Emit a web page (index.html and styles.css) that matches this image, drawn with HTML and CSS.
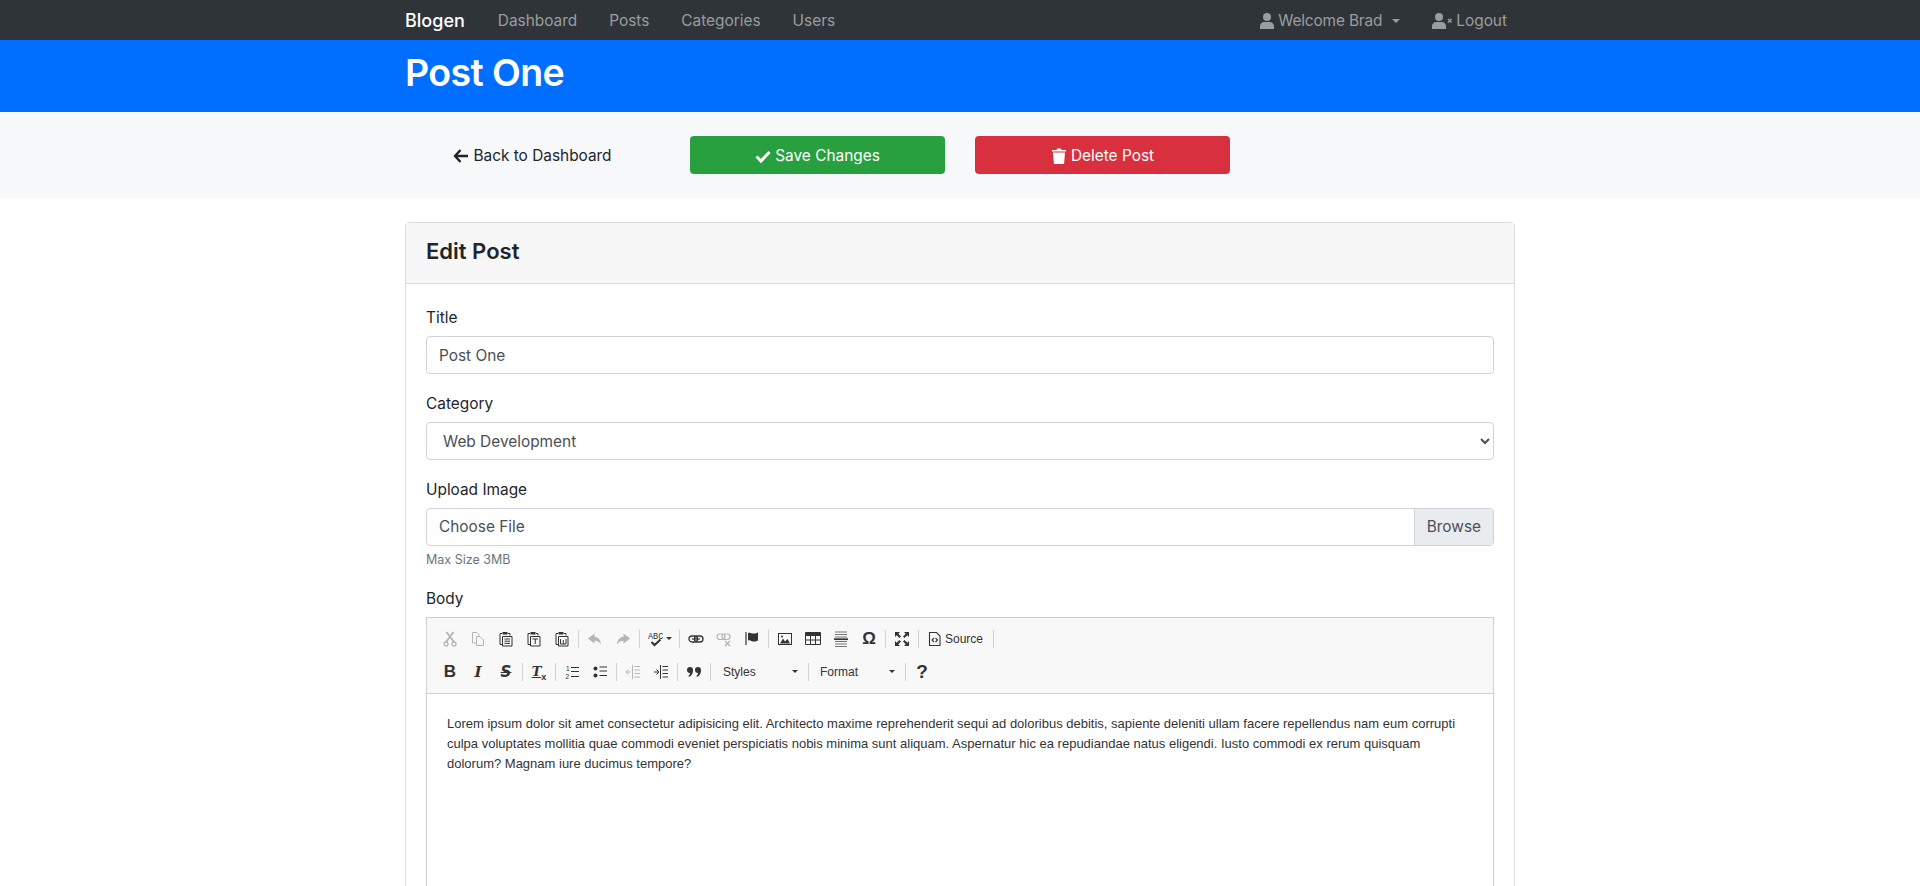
FILE: index.html
```html
<!DOCTYPE html>
<html>
<head>
	<title>Blogen - Edit Post</title>
	<link rel="stylesheet" href="styles.css">
</head>
<body>
	<nav class="navbar">
		<div class="container nav-row">
			<a class="brand">Blogen</a>
			<a class="nav-link">Dashboard</a>
			<a class="nav-link">Posts</a>
			<a class="nav-link">Categories</a>
			<a class="nav-link">Users</a>
			<a class="nav-link push">
				<svg class="ico-user" viewBox="0 0 14 16"><circle cx="7" cy="4" r="4"/><path d="M0 16v-2.500C0 10.500 2 9 4 9h6c2 0 4 1.500 4 4.500V16z"/></svg>
				Welcome Brad<span class="caret"></span>
			</a>
			<a class="nav-link logout">
				<svg class="ico-logout" viewBox="0 0 21 16"><circle cx="7" cy="4" r="4"/><path d="M0 16v-2.500C0 10.500 2 9 4 9h6c2 0 4 1.500 4 4.500V16z"/><path d="M16 6l3.500 3.500M19.500 6L16 9.500" class="x"/></svg>
				Logout
			</a>
		</div>
	</nav>

	<header class="page-head">
		<div class="container">
			<h1>Post One</h1>
		</div>
	</header>

	<section class="actions">
		<div class="container action-row">
			<a class="btn btn-light">
				<svg class="ico" viewBox="0 0 16 16"><path d="M7.500 2L2 8l5.500 6M2.500 8H15" fill="none" stroke="currentColor" stroke-width="2.400"/></svg>
				Back to Dashboard
			</a>
			<a class="btn btn-success">
				<svg class="ico" viewBox="0 0 16 16"><path d="M1.500 8.500l4.500 4.500 8.500-9" fill="none" stroke="currentColor" stroke-width="3"/></svg>
				Save Changes
			</a>
			<a class="btn btn-danger">
				<svg class="ico" viewBox="0 0 14 16"><path d="M0 2h4.500l.7-1.500h3.600L9.500 2H14v1.500H0zM1 4.500h12l-.8 10.200c0 .8-.6 1.300-1.300 1.300H3.100c-.7 0-1.300-.5-1.300-1.300z"/></svg>
				Delete Post
			</a>
		</div>
	</section>

	<main class="container content">
		<div class="card">
			<div class="card-header"><h4>Edit Post</h4></div>
			<div class="card-body">
				<div class="form-group">
					<label>Title</label>
					<input class="form-control" type="text" value="Post One">
				</div>
				<div class="form-group">
					<label>Category</label>
					<select class="form-control">
						<option>Web Development</option>
					</select>
				</div>
				<div class="form-group">
					<label>Upload Image</label>
					<div class="file-field">
						<span class="file-name">Choose File</span>
						<span class="file-btn">Browse</span>
					</div>
					<small class="hint">Max Size 3MB</small>
				</div>
				<div class="form-group">
					<label>Body</label>
					<div class="editor">
						<div class="toolbar">
							<div class="tool-row">
								<svg class="t off" viewBox="0 0 16 16"><path d="M4.500 1l7.500 10M11.500 1L4 11" fill="none" stroke="currentColor" stroke-width="1.800"/><circle cx="4" cy="13" r="2" fill="none" stroke="currentColor" stroke-width="1.300"/><circle cx="12" cy="13" r="2" fill="none" stroke="currentColor" stroke-width="1.300"/></svg>
								<svg class="t off" viewBox="0 0 16 16"><path d="M7 12H2.500V1.500H7L9 3.500V5M6.500 5.500H10l3.500 3.500v5.500h-7z" fill="none" stroke="currentColor"/></svg>
								<svg class="t" viewBox="0 0 16 16"><path d="M4 2.500H2v11h2M10 2.500h2v2" fill="none" stroke="currentColor"/><path d="M4.500 1h5v2.500h-5z"/><path d="M4.500 5.500h9.500v9.500H4.500z" fill="none" stroke="currentColor"/><path d="M6.500 8h5.500M6.500 10.200h5.500M6.500 12.400h5.500" stroke="currentColor"/></svg>
								<svg class="t" viewBox="0 0 16 16"><path d="M4 2.500H2v11h2M10 2.500h2v2" fill="none" stroke="currentColor"/><path d="M4.500 1h5v2.500h-5z"/><path d="M4.500 5.500h9.500v9.500H4.500z" fill="none" stroke="currentColor"/><path d="M6.500 8h5.500M9.250 8v5" stroke="currentColor"/></svg>
								<svg class="t" viewBox="0 0 16 16"><path d="M4 2.500H2v11h2M10 2.500h2v2" fill="none" stroke="currentColor"/><path d="M4.500 1h5v2.500h-5z"/><path d="M4.500 5.500h9.500v9.500H4.500z" fill="none" stroke="currentColor"/><path d="M6.500 8v5h5.500V8M9.250 9v4" fill="none" stroke="currentColor"/></svg>
								<i class="sep"></i>
								<svg class="t off" viewBox="0 0 16 16"><path d="M7.500 2.500L1 7.500l6.500 5V9.800c2.800 0 4.800 1 6.500 3.700-.3-4.500-2.700-7.200-6.500-7.700z"/></svg>
								<svg class="t off" viewBox="0 0 16 16"><path d="M8.500 2.500l6.500 5-6.500 5V9.800c-2.800 0-4.800 1-6.500 3.700.3-4.500 2.700-7.200 6.500-7.700z"/></svg>
								<i class="sep"></i>
								<span class="spell">
									<svg class="t-wide" viewBox="0 0 15 16"><text x="0" y="7.500" class="abc">ABC</text><path d="M3.500 11l3 3 6-5.500" fill="none" stroke="currentColor" stroke-width="2"/></svg>
									<span class="mini-caret"></span>
								</span>
								<i class="sep"></i>
								<svg class="t" viewBox="0 0 16 16"><rect x="1" y="5" width="8.500" height="6" rx="3" fill="none" stroke="currentColor" stroke-width="1.300"/><rect x="6.500" y="5" width="8.500" height="6" rx="3" fill="none" stroke="currentColor" stroke-width="1.300"/><path d="M4 8h8" stroke="currentColor" stroke-width="1.200"/></svg>
								<svg class="t off" viewBox="0 0 16 16"><rect x="1" y="3" width="8" height="5.500" rx="2.700" fill="none" stroke="currentColor" stroke-width="1.200"/><rect x="6" y="3" width="8" height="5.500" rx="2.700" fill="none" stroke="currentColor" stroke-width="1.200"/><path d="M9 10l5 5M14 10l-5 5" stroke="currentColor" stroke-width="1.300"/></svg>
								<svg class="t" viewBox="0 0 16 16"><path d="M2 1v13" stroke="currentColor" stroke-width="1.200"/><path d="M4 2c3-1 3 .5 5 .5s3 0 5-1v8c-2 1-3 1-5 1s-2-2-5-1z"/></svg>
								<i class="sep"></i>
								<svg class="t" viewBox="0 0 16 16"><rect x="1.500" y="2.500" width="13" height="11" fill="none" stroke="currentColor"/><path d="M3 12.500l3-5 2 3 2.500-2.500 2.500 4.500z"/><circle cx="5" cy="5.500" r="1"/></svg>
								<svg class="t" viewBox="0 0 16 16"><path d="M.5 1.500h15v12H.5z" fill="none" stroke="currentColor"/><path d="M.5 1.500h15v3.500H.5z"/><path d="M.5 9h15M5.500 5v8.500M10.500 5v8.500" stroke="currentColor"/></svg>
								<svg class="t" viewBox="0 0 16 16"><path d="M2 1h12M2 3.500h12M2 6h12M2 10.500h12M2 13h12M2 15.500h12" stroke="#777"/><path d="M1 8.200h14" stroke="currentColor" stroke-width="1.700"/></svg>
								<span class="omega">Ω</span>
								<i class="sep"></i>
								<svg class="t" viewBox="0 0 16 16"><path d="M1 1h5L4.300 2.700 7 5.400 5.400 7 2.700 4.300 1 6zM15 1v5l-1.700-1.700L10.600 7 9 5.400l2.700-2.700L10 1zM1 15v-5l1.700 1.700L5.400 9 7 10.600l-2.700 2.700L6 15zM15 15h-5l1.700-1.700L9 10.600 10.600 9l2.700 2.700L15 10z"/></svg>
								<i class="sep"></i>
								<svg class="t" viewBox="0 0 16 16"><path d="M2.500 1.500h7L13 5v9.500H2.500z" fill="none" stroke="currentColor" stroke-width="1.100"/><path d="M7 7L5 9l2 2M8.500 7l2 2-2 2" fill="none" stroke="currentColor" stroke-width="1.100"/></svg>
								<span class="t-label">Source</span>
								<i class="sep"></i>
							</div>
							<div class="tool-row">
								<span class="g bold">B</span>
								<span class="g italic">I</span>
								<span class="g strike">S</span>
								<i class="sep"></i>
								<span class="g clear"><u>T</u><sub>x</sub></span>
								<i class="sep"></i>
								<svg class="t" viewBox="0 0 16 16"><path d="M7 3.500h8M7 7.500h8M7 12.500h8" stroke="currentColor" stroke-width="1.200"/><text x="2" y="6.500" class="num">1</text><text x="1.500" y="14.500" class="num">2</text></svg>
								<svg class="t" viewBox="0 0 16 16"><circle cx="3.500" cy="4.500" r="2"/><circle cx="3.500" cy="11.500" r="2"/><path d="M7.500 3h7.500M7.500 7h7.500M7.500 11.500h7.500" stroke="currentColor" stroke-width="1.200"/></svg>
								<i class="sep"></i>
								<svg class="t off" viewBox="0 0 16 16"><path d="M7.500 1v14M9.500 2.500H15M9.500 6H15M9.500 9.500H15M9.500 13H15M1 8h4.500M3.500 5.500L1 8l2.500 2.500" fill="none" stroke="currentColor"/></svg>
								<svg class="t" viewBox="0 0 16 16"><path d="M7.500 1v14M9.500 2.500H15M9.500 6H15M9.500 9.500H15M9.500 13H15M1 8h4.500M3.500 5.500L6 8l-2.500 2.500" fill="none" stroke="currentColor"/></svg>
								<i class="sep"></i>
								<svg class="t" viewBox="0 0 16 16"><circle cx="4" cy="6" r="3"/><path d="M7 6c0 3.500-1.500 6-4 7l-.5-1c1-.8 1.500-2.500 1.500-3z"/><circle cx="12" cy="6" r="3"/><path d="M15 6c0 3.500-1.500 6-4 7l-.5-1c1-.8 1.500-2.500 1.500-3z"/></svg>
								<i class="sep"></i>
								<span class="combo combo-styles">Styles<span class="mini-caret"></span></span>
								<i class="sep"></i>
								<span class="combo combo-format">Format<span class="mini-caret"></span></span>
								<i class="sep"></i>
								<span class="g help">?</span>
							</div>
						</div>
						<div class="editor-body">
							<p>Lorem ipsum dolor sit amet consectetur adipisicing elit. Architecto maxime reprehenderit sequi ad doloribus debitis, sapiente deleniti ullam facere repellendus nam eum corrupti culpa voluptates mollitia quae commodi eveniet perspiciatis nobis minima sunt aliquam. Aspernatur hic ea repudiandae natus eligendi. Iusto commodi ex rerum quisquam dolorum? Magnam iure ducimus tempore?</p>
						</div>
					</div>
				</div>
			</div>
		</div>
	</main>
</body>
</html>
```

FILE: styles.css
```css
* { box-sizing: border-box; }

body {
	margin: 0;
	font-family: Inter, "Liberation Sans", sans-serif;
	font-size: 16px;
	line-height: 24px;
	color: #212529;
	background: #fff;
}

a { text-decoration: none; }

.container { width: 1140px; margin: 0 auto; padding: 0 15px; }
.content { padding-top: 24px; }

/* navbar */
.navbar { height: 40px; background: #2f3438; }
.nav-row { display: flex; align-items: center; height: 40px; padding-top: 2px; }
.brand { color: #fff; font-size: 18px; font-weight: 500; margin-right: 33px; }
.nav-link { color: #9a9da0; font-size: 15.4px; margin-right: 32px; display: flex; align-items: center; }
.nav-link.push { margin-left: auto; letter-spacing: -.15px; }
.nav-link.logout { margin-right: 8px; }
.ico-user { width: 14px; height: 16px; fill: currentColor; margin-right: 4px; }
.ico-logout { width: 21px; height: 16px; fill: currentColor; margin-right: 3px; }
.ico-logout .x { stroke: currentColor; stroke-width: 1.500; fill: none; }
.caret {
	width: 0; height: 0; margin-left: 10px;
	border-top: 4px solid currentColor;
	border-left: 4px solid transparent;
	border-right: 4px solid transparent;
}

/* blue title */
.page-head { height: 72px; background: #006fff; color: #fff; }
.page-head h1 { margin: 0; font-size: 37.5px; line-height: 66px; font-weight: 600; letter-spacing: -.6px; }

/* action buttons */
.actions { height: 86px; background: #f7f8fa; }
.action-row { display: grid; grid-template-columns: repeat(4, 255px); column-gap: 30px; padding-top: 24px; }
.btn {
	display: flex; align-items: center; justify-content: center;
	height: 38px; padding-top: 2px; border-radius: 4px; font-size: 15.4px; gap: 4px;
}
.btn-light { color: #212529; }
.btn-success { background: #28a03f; color: #fff; }
.btn-danger { background: #d8303e; color: #fff; }
.ico { width: 16px; height: 16px; fill: currentColor; }

/* card */
.card { border: 1px solid #dcdcdc; border-radius: 4px; }
.card-header { height: 61px; padding: 0 20px 5px; background: #f7f7f7; border-bottom: 1px solid #dcdcdc; display: flex; align-items: center; }
.card-header h4 { margin: 0; font-size: 22px; font-weight: 600; }
.card-body { padding: 20px; }

.form-group { margin-bottom: 16px; }
label { display: block; padding-top: 2px; margin-bottom: 6px; font-size: 15.4px; }
.form-control {
	display: block; width: 100%; height: 38px;
	padding: 6px 12px;
	border: 1px solid #ced4da; border-radius: 4px;
	background: #fff; color: #495057;
	font-family: inherit; font-size: 15.4px;
}
.file-field { display: flex; height: 38px; border: 1px solid #ced4da; border-radius: 4px; color: #495057; font-size: 15.4px; overflow: hidden; }
.file-name { flex: 1; padding: 6px 12px; }
.file-btn { padding: 6px 12px; background: #e9ecef; border-left: 1px solid #ced4da; }
.hint { display: block; margin-top: 4px; font-size: 12.500px; line-height: 19px; color: #6c757d; }

/* editor */
.editor { border: 1px solid #d1d1d1; font-family: "Liberation Sans", sans-serif; }
.toolbar { height: 76px; padding: 4px 0 0 15px; background: #f8f8f8; border-bottom: 1px solid #d1d1d1; color: #333; }
.tool-row { display: flex; align-items: center; height: 33px; gap: 12px; }
.t { width: 16px; height: 16px; fill: currentColor; flex: none; }
.t.off { color: #b5b5b5; }
.t-wide { width: 15px; height: 16px; fill: currentColor; }
.abc { font-family: "Liberation Mono", monospace; font-size: 8.500px; }
.num { font-size: 6.500px; }
.sep { width: 1px; height: 18px; background: #d1d1d1; margin: 0 -4px; flex: none; }
.spell { display: flex; align-items: center; gap: 3px; }
.mini-caret {
	width: 0; height: 0; display: inline-block;
	border-top: 3px solid #333;
	border-left: 3px solid transparent;
	border-right: 3px solid transparent;
}
.spell .mini-caret { margin-right: -1px; }
.omega { width: 16px; font-size: 17px; font-weight: 700; line-height: 16px; text-align: center; }
.t-label { font-size: 12px; margin-left: -10px; margin-right: 2px; }
.g { width: 16px; text-align: center; font-size: 16px; font-weight: 700; line-height: 16px; flex: none; }
.bold { font-size: 17px; }
.italic { font-family: "DejaVu Serif", serif; font-style: italic; font-size: 15px; }
.strike { font-family: "DejaVu Sans", sans-serif; font-style: italic; font-size: 15px; text-decoration: line-through; }
.clear { font-family: "DejaVu Serif", serif; font-style: italic; font-size: 13px; }
.clear sub { font-size: 9px; line-height: 0; font-style: normal; font-family: "Liberation Sans", sans-serif; }
.help { font-size: 19px; }
.combo { display: flex; align-items: center; justify-content: space-between; font-size: 12px; flex: none; }
.combo-styles { width: 81px; padding: 0 2px 0 4px; }
.combo-format { width: 80px; padding: 0 2px 0 3px; }
.editor-body { height: 300px; padding: 20px; background: #fff; color: #333; font-size: 13px; line-height: 20px; }
.editor-body p { margin: 0; }
```
